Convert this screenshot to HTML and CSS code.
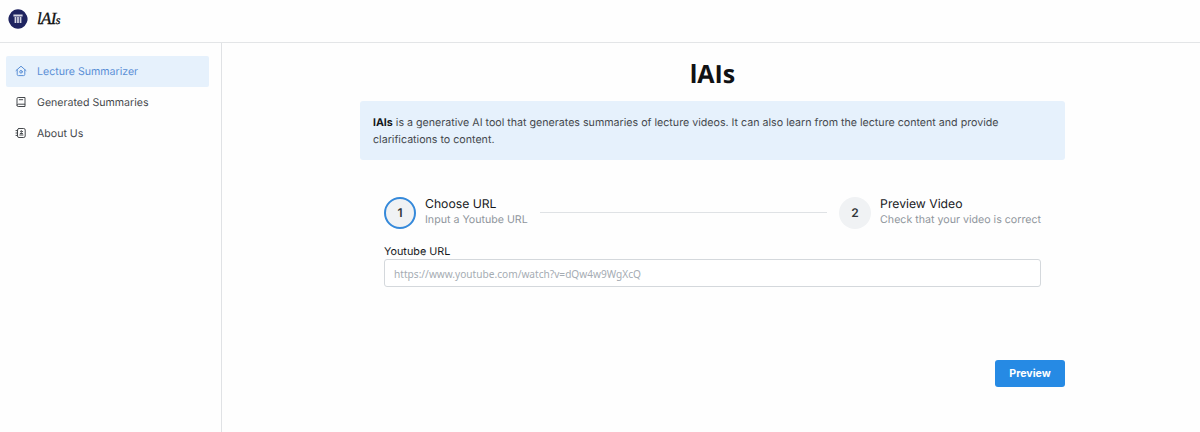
FILE: index.html
```html
<!DOCTYPE html>
<html lang="en">
<head>
<meta charset="utf-8">
<title>lAIs</title>
<link rel="stylesheet" href="styles.css">
</head>
<body>
<header class="topbar">
  <svg class="logo" viewBox="0 0 20 20"><path d="M6.2 1Q10-.4 13.8 1Q17.4 2.8 18.8 6.4Q20.4 10 18.8 13.6Q17.4 17.2 13.8 19Q10 20.4 6.2 19Q2.6 17.2 1.2 13.6Q-.4 10 1.2 6.4Q2.6 2.8 6.2 1Z" fill="#1f2460"/><path d="M5.4 5.6h9.2v2H5.4zM6.6 8h1.7v6H6.6zM9.15 8h1.7v6h-1.7zM11.7 8h1.7v6h-1.7z" fill="#d5d6e3"/></svg>
  <span class="wordmark">lAI<span class="small-s">s</span></span>
</header>
<div class="shell">
  <nav class="sidebar">
    <a class="nav-item active"><svg class="icon" viewBox="0 0 12 12"><path d="M1 5.6 6 1.2l5 4.4M2.2 4.8v4.6q0 1.2 1.2 1.2h5.2q1.2 0 1.2-1.2V4.8"/><circle cx="6" cy="6.8" r="1.3"/></svg><span>Lecture Summarizer</span></a>
    <a class="nav-item"><svg class="icon" viewBox="0 0 12 12"><path d="M10 8.2V1.5H3.2Q2 1.5 2 2.7v6.6q0 1.2 1.2 1.2H10V8.2H3.2Q2 8.2 2 9.3M4.3 3.7h3.4"/></svg><span>Generated Summaries</span></a>
    <a class="nav-item"><svg class="icon" viewBox="0 0 12 12"><rect x="2.5" y="1.5" width="7.7" height="9" rx="1.5"/><path d="M1 3.6h1.7M1 6h1.7M1 8.4h1.7M4.8 8h3.2M5.3 6.5h2.2"/><circle cx="6.4" cy="4.5" r=".8"/></svg><span>About Us</span></a>
  </nav>
  <main class="content">
    <h1 class="title">lAIs</h1>
    <p class="notice"><b>lAIs</b> is a generative AI tool that generates summaries of lecture videos. It can also learn from the lecture content and provide clarifications to content.</p>
    <section class="form">
      <div class="stepper">
        <div class="step"><span class="badge current">1</span><div class="step-text"><div class="step-title">Choose URL</div><div class="step-note">Input a Youtube URL</div></div></div>
        <div class="rule"></div>
        <div class="step"><span class="badge">2</span><div class="step-text"><div class="step-title">Preview Video</div><div class="step-note">Check that your video is correct</div></div></div>
      </div>
      <label class="label" for="url">Youtube URL</label>
      <input class="url" id="url" placeholder="https://www.youtube.com/watch?v=dQw4w9WgXcQ">
    </section>
    <div class="actions"><button class="preview">Preview</button></div>
  </main>
</div>
</body>
</html>
```
FILE: styles.css
```css
* { box-sizing: border-box; }
body { margin: 0; height: 432px; overflow: hidden; background: #fefefe; color: #17191c; font-family: Inter, sans-serif; text-rendering: geometricPrecision; }
.topbar { height: 43px; border-bottom: 1px solid #e3e5e7; display: flex; align-items: flex-start; padding: 9px 8px; gap: 9px; }
.logo { width: 20px; height: 20px; }
.wordmark { font: italic 17px/20px "Liberation Serif", serif; letter-spacing: -.7px; color: #111; -webkit-text-stroke: .3px #111; }
.small-s { font-size: 12px; }
.shell { display: flex; height: 389px; }
.sidebar { width: 222px; flex: none; border-right: 1px solid #e0e2e5; padding: 13px 12px 0 6px; }
.nav-item { display: flex; align-items: center; height: 31px; padding-left: 9px; gap: 10px; font-size: 10.6px; color: #45484c; }
.nav-item.active { background: #e6f1fc; color: #5a8fd6; border-radius: 2px; }
.icon { width: 12px; height: 12px; margin-bottom: 2px; fill: none; stroke: currentColor; stroke-width: 1; stroke-linecap: round; stroke-linejoin: round; }
.content { width: 705px; margin-left: 138px; padding-top: 13px; }
.title { margin: 0; height: 45px; text-align: center; font: 700 25px/36px "Open Sans", sans-serif; color: #101214; }
.notice { margin: 0; height: 59px; padding: 13px 13px; background: #e6f1fc; border-radius: 3px; font-size: 10.66px; line-height: 17px; color: #45494e; }
.notice b { color: #15171a; }
.form { padding: 36px 24px 0; }
.stepper { display: flex; align-items: center; height: 33px; }
.step { display: flex; align-items: center; gap: 9px; }
.badge { width: 32px; height: 32px; border-radius: 50%; background: #f0f2f4; display: flex; align-items: center; justify-content: center; font-size: 12px; font-weight: 600; color: #33373b; }
.badge.current { border: 2px solid #3589da; }
.step-title { font-size: 12.2px; line-height: 17px; margin-top: -3px; }
.step-note { font-size: 10.65px; line-height: 15px; color: #8e959c; }
.rule { flex: 1; height: 1px; background: #dfe2e5; margin: 0 12px; }
.label { display: block; font-size: 10.8px; line-height: 15px; margin-top: 15px; }
.url { display: block; width: 657px; height: 28px; padding: 1px 9px 0; border: 1px solid #d4d8dc; border-radius: 3px; background: #fff; font: 10.15px "Noto Sans", sans-serif; }
.url::placeholder { color: #a5acb3; opacity: 1; }
.actions { display: flex; justify-content: flex-end; margin-top: 73px; }
.preview { width: 70px; height: 27px; padding: 0; border: 0; border-radius: 3px; background: #268ae4; color: #fff; font: 700 10.6px Inter, sans-serif; }
```
